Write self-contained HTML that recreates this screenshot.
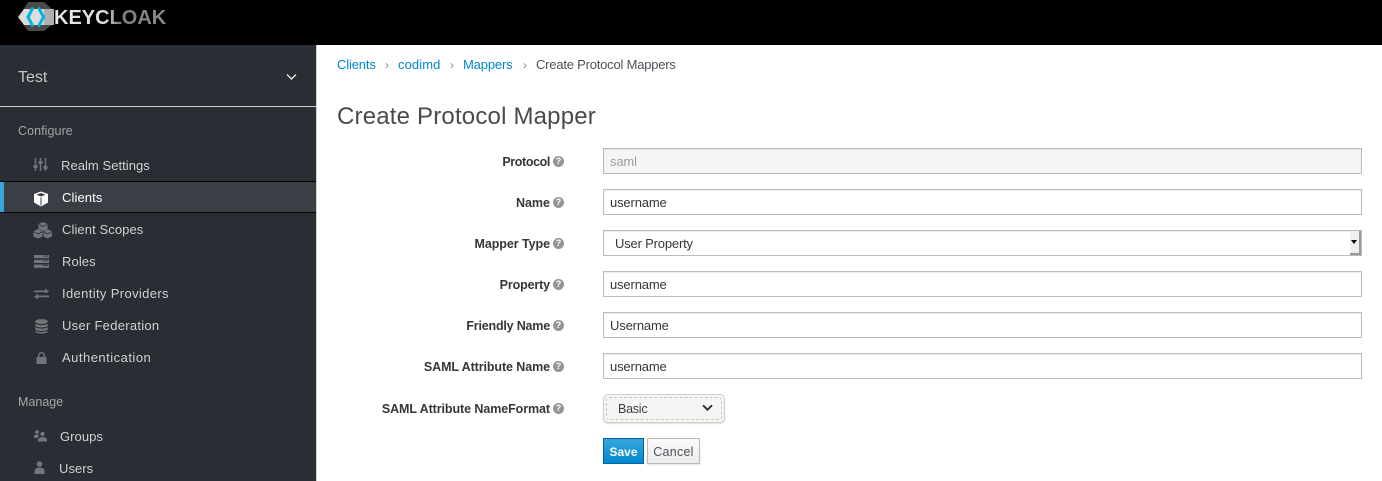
<!DOCTYPE html>
<html><head><meta charset="utf-8"><style>
html,body{margin:0;padding:0;width:1382px;height:481px;overflow:hidden;background:#fff}
body{position:relative;font-family:"Liberation Sans",sans-serif;font-size:13px;color:#363636}
.a{position:absolute;white-space:nowrap;line-height:18px}
.nav{color:#d1d1d1}
.cat{color:#a3a5a7;font-size:12.5px}
.lab{font-weight:bold;color:#363636;text-align:right;right:832px;font-size:12.5px}
.q{position:absolute;width:11px;height:11px;border-radius:50%;background:#929496;color:#fff;font:bold 9px/11px "Liberation Sans",sans-serif;text-align:center;left:553px}
.in{position:absolute;left:603px;width:757px;height:24px;border:1px solid #bbb;background:#fff;padding:0;line-height:26px;box-sizing:content-box;box-shadow:inset 0 1px 1px rgba(3,3,3,.08)}
.in span{position:absolute;left:6px;top:0;letter-spacing:-.15px;white-space:nowrap}
.link{color:#0088ce}
svg{position:absolute}
</style></head><body>
<div class="a" style="left:0;top:0;width:1382px;height:45px;background:#000"></div>
<svg style="left:18px;top:0" width="38" height="33" viewBox="0 0 38 33">
<polygon points="10,2 26,2 35,10 35,24 26,31 10,31 5,24 5,10" fill="#4a4a4a"/>
<polygon points="0,17 6,9 36,9 36,25 6,25" fill="#dcdcdc"/>
<polygon points="26,9 36,9 36,25 26,25" fill="#b0b0b0"/>
<path d="M15 7.5 L10 17 L15 26.5 M20.5 7.5 L25.5 17 L20.5 26.5" fill="none" stroke="#00b5e2" stroke-width="3"/>
</svg>
<div class="a" style="left:54px;top:6px;font-size:20px;line-height:24px;font-weight:bold;background:linear-gradient(90deg,#e6e6e6 0,#e0e0e0 45%,#7f7f7f 58%,#8a8a8a 100%);-webkit-background-clip:text;background-clip:text;color:transparent">KEYCLOAK</div>

<div class="a" style="left:0;top:45px;width:316px;height:436px;background:#292e34"></div>
<div class="a" style="left:316px;top:45px;width:1px;height:436px;background:#d1d1d1"></div>
<div class="a" style="left:18px;top:68px;font-size:16px;line-height:20px;color:#c8c8c8">Test</div>
<svg style="left:286px;top:73px" width="11" height="8" viewBox="0 0 11 8"><path d="M1 1.5 L5.5 6 L10 1.5" fill="none" stroke="#e8e8e8" stroke-width="1.4"/></svg>
<div class="a" style="left:0;top:106px;width:316px;height:1px;background:#d1d1d1"></div>

<div class="a cat" style="left:18px;top:122px;letter-spacing:.07px">Configure</div>
<div class="a" style="left:0;top:181px;width:316px;height:32px;box-sizing:border-box;border-top:1px solid #030303;border-bottom:1px solid #030303;background:#393f44"></div>
<div class="a" style="left:0;top:182px;width:4px;height:30px;background:#39a5dc"></div>

<svg style="left:33px;top:157px" width="16" height="16" viewBox="0 0 16 16" fill="none" stroke="#72767b" stroke-width="1.4"><path d="M2.5 1V14M7.5 1V14M12.5 1V14"/><g fill="#72767b" stroke="none"><rect x="0.5" y="8" width="4" height="3"/><rect x="5.5" y="4" width="4" height="3"/><rect x="10.5" y="9" width="4" height="3"/></g></svg>
<div class="a nav" style="left:61px;top:157px;letter-spacing:.05px">Realm Settings</div>

<svg style="left:33px;top:191px" width="16" height="16" viewBox="0 0 16 16"><path d="M8 .5 L15 3 V11.5 L8 15.5 L1 11.5 V3Z" fill="#fff"/><path d="M8 2 L12.5 3.7 L8 5.5 L3.5 3.7Z" fill="#393f44"/><path d="M8 6.5V14.5" stroke="#393f44" stroke-width="1"/></svg>
<div class="a nav" style="left:62px;top:189px;color:#fff;letter-spacing:.1px">Clients</div>

<svg style="left:33px;top:222px" width="20" height="17" viewBox="0 0 20 17" fill="#72767b"><path d="M10 0 L14.5 2 V7 L10 9 L5.5 7 V2Z"/><path d="M5 7 L9.5 9.5 V14.5 L5 16.5 L0.5 14.5 V9.5Z"/><path d="M14.5 7 L19 9.5 V14.5 L14.5 16.5 L10.5 14.5 V9.5Z"/><path d="M6 2.5 L10 4.5 L14 2.5 M1 10 L5 12 L9 10 M11 10 L14.5 12 L18.5 10" fill="none" stroke="#292e34" stroke-width=".8"/></svg>
<div class="a nav" style="left:62px;top:221px;letter-spacing:.09px">Client Scopes</div>

<svg style="left:34px;top:255px" width="15" height="13" viewBox="0 0 15 13" fill="#72767b"><rect y="0" width="15" height="3.2"/><rect y="4.8" width="15" height="3.2"/><rect y="9.6" width="15" height="3.2"/><path d="M9 1H14M9 5.8H14M9 10.6H14" stroke="#292e34" stroke-width=".7"/></svg>
<div class="a nav" style="left:62px;top:253px;letter-spacing:.1px">Roles</div>

<svg style="left:34px;top:288px" width="15" height="12" viewBox="0 0 15 12" fill="#72767b"><path d="M0 2.5H11V0.5L15 3.5 11 5.5V4.2H0Z"/><path d="M15 7.5H4V5.8L0 8.8 4 11.5V9.2H15Z"/></svg>
<div class="a nav" style="left:62px;top:285px;letter-spacing:.36px">Identity Providers</div>

<svg style="left:35px;top:319px" width="13" height="15" viewBox="0 0 13 15" fill="#72767b"><ellipse cx="6.5" cy="2.5" rx="6.3" ry="2.4"/><path d="M.2 4.5C1.5 6.5 11.5 6.5 12.8 4.5V7C11.5 9 1.5 9 .2 7Z"/><path d="M.2 8C1.5 10 11.5 10 12.8 8V10.5C11.5 12.5 1.5 12.5 .2 10.5Z"/><path d="M.2 11.5C1.5 13.5 11.5 13.5 12.8 11.5V12.8C11.5 15.2 1.5 15.2 .2 12.8Z"/></svg>
<div class="a nav" style="left:62px;top:317px;letter-spacing:.28px">User Federation</div>

<svg style="left:36px;top:352px" width="11" height="12" viewBox="0 0 11 12"><rect x="0.5" y="5" width="10" height="7" fill="#72767b"/><path d="M2.7 5.5V3.5a2.8 2.8 0 0 1 5.6 0V5.5" fill="none" stroke="#72767b" stroke-width="1.4"/></svg>
<div class="a nav" style="left:62px;top:349px;letter-spacing:.49px">Authentication</div>

<div class="a cat" style="left:18px;top:393px">Manage</div>
<svg style="left:33px;top:429px" width="14" height="13" viewBox="0 0 14 13" fill="#72767b"><circle cx="4" cy="3" r="1.9"/><path d="M1 9V7.5C1 6 2.5 5.5 4 5.5S6 6 6 6.5L4.5 9Z"/><circle cx="9.5" cy="5" r="2.2"/><path d="M5 12.5V11C5 9 7.5 8 9.5 8S14 9 14 11V12.5Z"/></svg>
<div class="a nav" style="left:60px;top:428px;letter-spacing:.05px">Groups</div>
<svg style="left:34px;top:461px" width="12" height="13" viewBox="0 0 12 13" fill="#72767b"><circle cx="5.5" cy="3" r="2.8"/><path d="M0.5 13V10C.5 7.5 3 6.5 5.5 6.5S10.5 7.5 10.5 10V13Z"/></svg>
<div class="a nav" style="left:59px;top:460px;letter-spacing:.05px">Users</div>

<div class="a link" style="left:337px;top:56px;letter-spacing:-.15px">Clients</div>
<div class="a" style="left:385px;top:56px;color:#8b8d8f;font-size:12px">›</div>
<div class="a link" style="left:398px;top:56px;letter-spacing:.1px">codimd</div>
<div class="a" style="left:450px;top:56px;color:#8b8d8f;font-size:12px">›</div>
<div class="a link" style="left:463px;top:56px;letter-spacing:-.15px">Mappers</div>
<div class="a" style="left:523px;top:56px;color:#8b8d8f;font-size:12px">›</div>
<div class="a" style="left:536px;top:56px;letter-spacing:-.21px;color:#4d5258">Create Protocol Mappers</div>
<div class="a" style="left:337px;top:102px;font-size:24px;line-height:30px;color:#4a4a4a;letter-spacing:.19px">Create Protocol Mapper</div>

<div class="a lab" style="top:153px;letter-spacing:-.38px">Protocol</div><div class="q" style="top:156px">?</div>
<div class="a lab" style="top:194px">Name</div><div class="q" style="top:197px">?</div>
<div class="a lab" style="top:235px;letter-spacing:-.06px">Mapper Type</div><div class="q" style="top:238px">?</div>
<div class="a lab" style="top:276px;letter-spacing:-.13px">Property</div><div class="q" style="top:279px">?</div>
<div class="a lab" style="top:317px;letter-spacing:-.19px">Friendly Name</div><div class="q" style="top:320px">?</div>
<div class="a lab" style="top:358px;letter-spacing:-.09px">SAML Attribute Name</div><div class="q" style="top:361px">?</div>
<div class="a lab" style="top:400px;letter-spacing:-.08px">SAML Attribute NameFormat</div><div class="q" style="top:403px">?</div>

<div class="in" style="top:148px;background:#f5f5f5;color:#9c9c9c"><span>saml</span></div>
<div class="in" style="top:189px"><span>username</span></div>
<div class="in" style="top:230px"><span style="left:11px;letter-spacing:-.18px">User Property</span>
<div style="position:absolute;right:0;top:0;width:11px;height:24px;background:#efefef;border-right:2px solid #9a9a9a;border-bottom:2px solid #9a9a9a;box-sizing:border-box"></div>
<div style="position:absolute;right:4px;top:9px;width:0;height:0;border-left:3px solid transparent;border-right:3px solid transparent;border-top:4px solid #000"></div></div>
<div class="in" style="top:271px"><span>username</span></div>
<div class="in" style="top:312px"><span>Username</span></div>
<div class="in" style="top:353px"><span>username</span></div>

<div class="a" style="left:603px;top:394px;width:122px;height:29px;box-sizing:border-box;border:1px solid #d1cfc9;border-radius:5px;background:#f6f5f3;box-shadow:0 1px 1px rgba(0,0,0,.12)"></div>
<div class="a" style="left:606px;top:397px;width:116px;height:23px;box-sizing:border-box;border:1px dashed #c8c6c0;border-radius:3px"></div>
<div class="a" style="left:618px;top:400px;letter-spacing:-.25px;font-size:12.5px;color:#3d3d3d">Basic</div>
<svg style="left:702px;top:404px" width="11" height="8" viewBox="0 0 11 8"><path d="M1 1.2 L5.5 5.8 L10 1.2" fill="none" stroke="#2b2b2b" stroke-width="1.8"/></svg>

<div class="a" style="left:603px;top:438px;width:41px;height:26px;box-sizing:border-box;border:1px solid #00659c;background:linear-gradient(#39a5dc,#0088ce);color:#fff;text-align:center;line-height:26px;font-weight:bold;font-size:12px">Save</div>
<div class="a" style="left:647px;top:438px;width:53px;height:26px;box-sizing:border-box;border:1px solid #bbb;background:linear-gradient(#fafafa,#ededed);color:#4d5258;text-align:center;line-height:26px;box-shadow:0 1px 2px rgba(0,0,0,.12);letter-spacing:.25px;font-size:12.5px">Cancel</div>
</body></html>
